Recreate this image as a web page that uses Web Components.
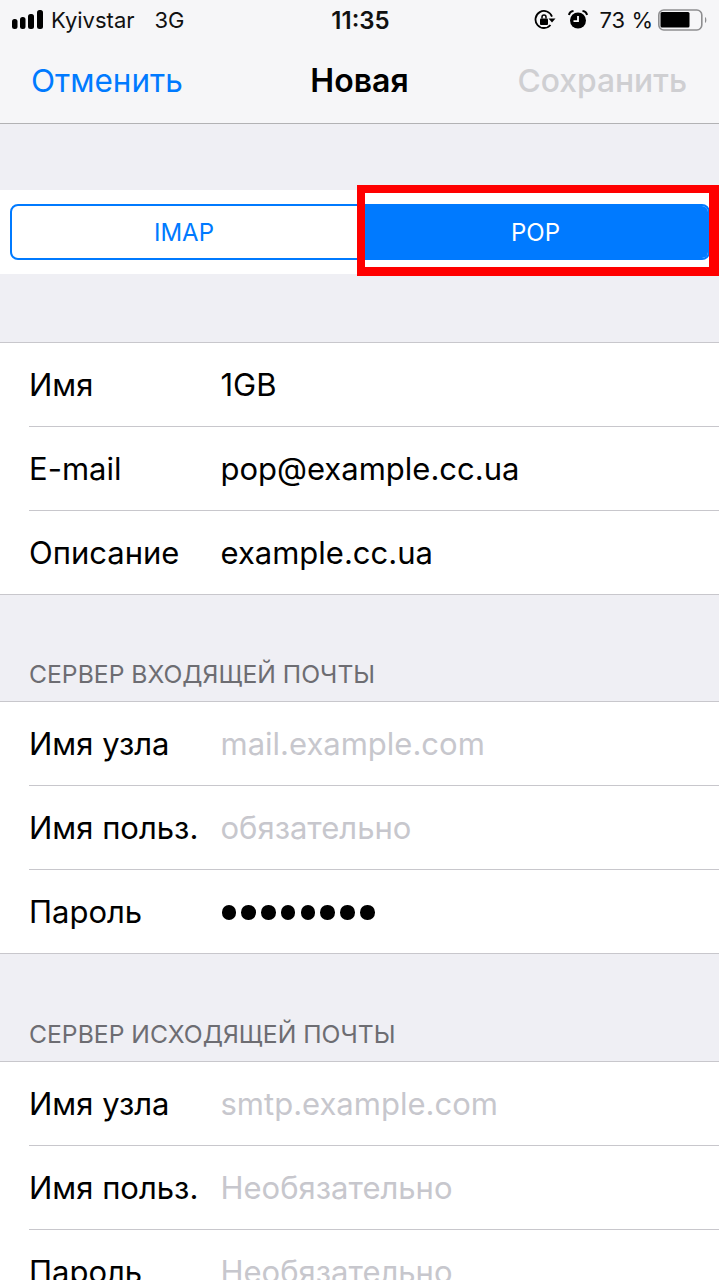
<!DOCTYPE html>
<html lang="ru">
<head>
<meta charset="utf-8">
<title>Новая</title>
<style>
html, body { margin: 0; padding: 0; background: #efeff4; }
body { width: 719px; height: 1280px; overflow: hidden; font-family: Inter, "Liberation Sans", sans-serif; color: #000; }
</style>
</head>
<body>
<mail-header></mail-header>
<type-switch></type-switch>
<form-group style="margin-top:68px">
  <form-row label="Имя" value="1GB"></form-row>
  <form-row label="E-mail" value="pop@example.cc.ua"></form-row>
  <form-row label="Описание" value="example.cc.ua" last></form-row>
</form-group>
<form-group title="СЕРВЕР ВХОДЯЩЕЙ ПОЧТЫ">
  <form-row label="Имя узла" placeholder="mail.example.com"></form-row>
  <form-row label="Имя польз." placeholder="обязательно"></form-row>
  <form-row label="Пароль" dots="8" last></form-row>
</form-group>
<form-group title="СЕРВЕР ИСХОДЯЩЕЙ ПОЧТЫ" style="--head-height:107px">
  <form-row label="Имя узла" placeholder="smtp.example.com"></form-row>
  <form-row label="Имя польз." placeholder="Необязательно"></form-row>
  <form-row label="Пароль" placeholder="Необязательно" last></form-row>
</form-group>

<script>
class MailHeader extends HTMLElement {
    connectedCallback() {
        this.attachShadow({ mode: 'open' });
        this.shadowRoot.innerHTML = `
            <style>
                :host { display: block; height: 123px; background: #f6f6f8; border-bottom: 1px solid #b2b2b4; }
                .status { height: 40px; display: flex; align-items: center; justify-content: space-between; padding: 0 11px 0 12px; font-size: 22px; color: #111; position: relative; }
                .side { display: flex; align-items: center; }
                .time { position: absolute; left: 2px; right: 0; text-align: center; font-size: 24px; font-weight: 600; }
                .net { margin-left: 20px; }
                .nav { height: 83px; display: grid; grid-template-columns: 1fr auto 1fr; align-items: center; padding: 0 32px 2px 31px; box-sizing: border-box; font-size: 31.500px; }
                .cancel { color: #007aff; }
                .title { font-weight: 600; font-size: 32px; margin-left: 1px; }
                .save { color: #cfcfd2; font-weight: 500; font-size: 31.800px; justify-self: end; }
                svg { display: block; }
            </style>
            <div class="status">
                <div class="side">
                    <svg width="32" height="20" viewBox="0 0 32 20" fill="#000">
                        <rect x="0" y="9" width="5.500" height="10" rx="2.500"/>
                        <rect x="8" y="7" width="5.500" height="12" rx="2.500"/>
                        <rect x="16" y="4" width="6" height="15" rx="2.500"/>
                        <rect x="25" y="0" width="6" height="19" rx="2.500"/>
                    </svg>
                    <span style="margin-left:7px">Kyivstar</span>
                    <span class="net">3G</span>
                </div>
                <div class="time">11:35</div>
                <div class="side">
                    <svg width="22" height="24" viewBox="0 0 22 24" fill="none" stroke="#000" stroke-width="1.800">
                        <path d="M16.500 17A8.500 8.500 0 1 1 18 8.600"/>
                        <path d="M14.500 10.500h7L18 14.500z" stroke="none" fill="#000"/>
                        <rect x="6" y="10.500" width="8" height="6.500" rx="1" fill="#000" stroke="none"/>
                        <path d="M8 10.500V9a2 2 0 0 1 4 0v1.500" stroke-width="1.500"/>
                    </svg>
                    <svg style="margin-left:12px" width="20" height="20" viewBox="0 0 20 20">
                        <circle cx="10" cy="10.500" r="8" fill="#000"/>
                        <path d="M10 6v5.200H5.500" fill="none" stroke="#fff" stroke-width="1.800"/>
                        <path d="M1 5Q1.500 1.500 5.500 1M19 5Q18.500 1.500 14.500 1" fill="none" stroke="#000" stroke-width="2"/>
                    </svg>
                    <span style="margin-left:12px">73 %</span>
                    <svg style="margin-left:5px" width="50" height="22" viewBox="0 0 50 22">
                        <rect x="0.800" y="1" width="43" height="20" rx="5" fill="none" stroke="#8e8e90" stroke-width="1.600"/>
                        <rect x="2.500" y="3" width="29" height="15.500" rx="1.500" fill="#000"/>
                        <path d="M47 8c1.800.5 1.800 5.500 0 6z" fill="#8e8e90"/>
                    </svg>
                </div>
            </div>
            <div class="nav">
                <span class="cancel">Отменить</span>
                <span class="title">Новая</span>
                <span class="save">Сохранить</span>
            </div>
        `;
    }
}

class TypeSwitch extends HTMLElement {
    connectedCallback() {
        this.attachShadow({ mode: 'open' });
        this.shadowRoot.innerHTML = `
            <style>
                :host { display: block; background: #fff; margin-top: 66px; padding: 14px 9px 14px 10px; position: relative; }
                .seg { display: grid; grid-template-columns: 1fr 1fr; height: 56px; border: 2px solid #007aff; border-radius: 8px; box-sizing: border-box; overflow: hidden; font-size: 24px; }
                .seg div { display: flex; align-items: center; justify-content: center; color: #007aff; }
                .seg .off { padding-right: 4px; }
                .seg .on { background: #007aff; color: #fff; padding-left: 3px; }
                .mark { position: absolute; left: 357px; top: -5px; right: 0; height: 91px; box-sizing: border-box; border: solid #f00; border-width: 8px 10px 9px 8px; }
            </style>
            <div class="seg"><div class="off">IMAP</div><div class="on">POP</div></div>
            <div class="mark"></div>
        `;
    }
}

class FormGroup extends HTMLElement {
    connectedCallback() {
        const title = this.getAttribute('title');
        this.removeAttribute('title');
        this.attachShadow({ mode: 'open' });
        this.shadowRoot.innerHTML = `
            <style>
                :host { display: block; }
                .head { height: var(--head-height, 106px); box-sizing: border-box; padding: 0 29px 12px; display: flex; align-items: flex-end; font-size: 24.700px; color: #6d6d72; }
                .rows { background: #fff; border-top: 1px solid #c8c7cc; border-bottom: 1px solid #c8c7cc; }
            </style>
            ${title ? `<div class="head">${title}</div>` : ''}
            <div class="rows"><slot></slot></div>
        `;
    }
}

class FormRow extends HTMLElement {
    connectedCallback() {
        const value = this.getAttribute('value');
        const hint = this.getAttribute('placeholder');
        const dots = Number(this.getAttribute('dots') || 0);
        let right = `<span class="val">${value || ''}</span>`;
        if (hint) right = `<span class="val hint">${hint}</span>`;
        if (dots) right = `<span class="dots">${'<i></i>'.repeat(dots)}</span>`;
        this.attachShadow({ mode: 'open' });
        this.shadowRoot.innerHTML = `
            <style>
                :host { display: block; padding-left: 29px; }
                .row { height: 83px; display: flex; align-items: center; padding-bottom: 1px; box-sizing: border-box; font-size: 31px; color: #000; }
                :host(:not([last])) .row { height: 84px; border-bottom: 1px solid #c8c7cc; }
                .lab { width: 191.500px; flex: none; }
                .hint { color: #c7c7cd; }
                .dots { display: flex; gap: 5.300px; margin-top: 3px; margin-left: 1px; }
                .dots i { width: 14.500px; height: 14.500px; border-radius: 50%; background: #000; }
            </style>
            <div class="row"><span class="lab">${this.getAttribute('label')}</span>${right}</div>
        `;
    }
}

customElements.define('mail-header', MailHeader);
customElements.define('type-switch', TypeSwitch);
customElements.define('form-group', FormGroup);
customElements.define('form-row', FormRow);
</script>
</body>
</html>
